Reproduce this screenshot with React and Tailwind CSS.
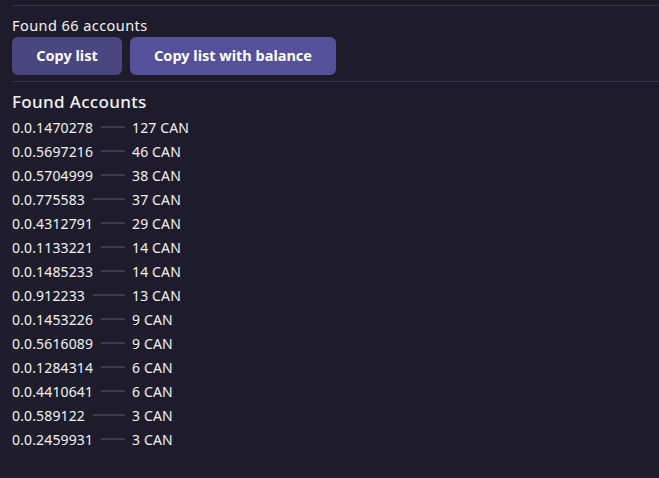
const accounts = [
  ["0.0.1470278", 127],
  ["0.0.5697216", 46],
  ["0.0.5704999", 38],
  ["0.0.775583", 37],
  ["0.0.4312791", 29],
  ["0.0.1133221", 14],
  ["0.0.1485233", 14],
  ["0.0.912233", 13],
  ["0.0.1453226", 9],
  ["0.0.5616089", 9],
  ["0.0.1284314", 6],
  ["0.0.4410641", 6],
  ["0.0.589122", 3],
  ["0.0.2459931", 3],
];

export default function App() {
  return (
    <div
      className="min-h-screen w-full bg-[#1e1c2b] text-[#f2f2f5] pl-3 pt-[5px]"
      style={{ fontFamily: '"Noto Sans", "Open Sans", sans-serif' }}
    >
      <div className="border-t border-[#35334b]" />

      <p className="mt-[10px] text-[14.5px] leading-[18px] tracking-[0.03em]">Found 66 accounts</p>

      <div className="mt-[3px] flex gap-2">
        <button className="h-[38px] w-[110px] rounded-md bg-[#4a4780] text-[14.5px] font-bold text-white">
          Copy list
        </button>
        <button className="h-[38px] w-[206px] rounded-md bg-[#54519a] text-[14.5px] font-bold text-white">
          Copy list with balance
        </button>
      </div>

      <div className="mt-[6px] border-t border-[#35334b]" />

      <h2 className="mt-[10px] text-[17px] font-medium leading-[20px] tracking-[0.02em]">Found Accounts</h2>

      <div className="mt-[3px] flex flex-col">
        {accounts.map(([id, bal]) => (
          <div key={id} className="flex h-6 items-center text-[14px] tracking-[0.01em]">
            <div className="flex w-[113px] items-center">
              <span>{id}</span>
              <span className="ml-2 h-[2px] flex-1 bg-[#393b4f]" />
            </div>
            <span className="ml-[7px]">{bal} CAN</span>
          </div>
        ))}
      </div>
    </div>
  );
}
